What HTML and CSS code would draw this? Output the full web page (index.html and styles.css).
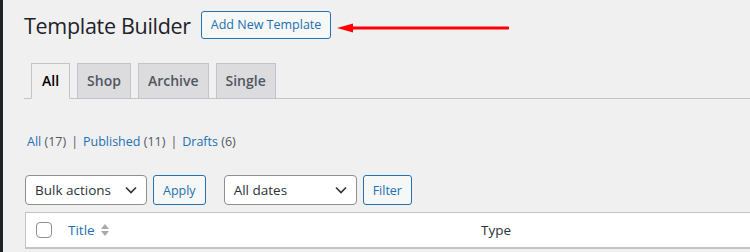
FILE: index.html
```html
<!DOCTYPE html>
<html>
<head>
  <link rel="stylesheet" href="styles.css">
</head>
<body>
  <div class="admin-edge"></div>
  <div class="wrap">
    <div class="page-header">
      <h1 class="page-title">Template Builder</h1>
      <a class="title-action">Add New Template</a>
      <svg class="pointer-arrow" width="172" height="12" viewBox="0 0 172 12">
        <line x1="12" y1="6" x2="171" y2="6" stroke="#ff0000" stroke-width="3" stroke-linecap="round"/>
        <polygon points="0,6 16,1.5 16,10.5" fill="#ff0000"/>
      </svg>
    </div>

    <nav class="nav-tabs">
      <a class="nav-tab active">All</a>
      <a class="nav-tab">Shop</a>
      <a class="nav-tab">Archive</a>
      <a class="nav-tab">Single</a>
    </nav>

    <ul class="subsubsub">
      <li><a>All</a> <span class="count">(17)</span></li>
      <li class="sep">|</li>
      <li><a>Published</a> <span class="count">(11)</span></li>
      <li class="sep">|</li>
      <li><a>Drafts</a> <span class="count">(6)</span></li>
    </ul>

    <div class="tablenav">
      <div class="select-box bulk">
        <span>Bulk actions</span>
        <svg width="12" height="8" viewBox="0 0 12 8"><path d="M1 1.5 6 6.5 11 1.5" fill="none" stroke="#2c3338" stroke-width="1.6"/></svg>
      </div>
      <button class="btn">Apply</button>
      <div class="select-box dates">
        <span>All dates</span>
        <svg width="12" height="8" viewBox="0 0 12 8"><path d="M1 1.5 6 6.5 11 1.5" fill="none" stroke="#2c3338" stroke-width="1.6"/></svg>
      </div>
      <button class="btn">Filter</button>
    </div>

    <div class="list-table">
      <div class="table-head">
        <div class="check-col"><span class="checkbox"></span></div>
        <div class="title-col">
          <a>Title</a>
          <svg class="sort" width="10" height="14" viewBox="0 0 10 14">
            <polygon points="1,6 5,1 9,6" fill="#a7aaad"/>
            <polygon points="1,8 9,8 5,13" fill="#a7aaad"/>
          </svg>
        </div>
        <div class="type-col">Type</div>
      </div>
    </div>
  </div>
</body>
</html>
```

FILE: styles.css
```css
* {
  box-sizing: border-box;
  margin: 0;
  padding: 0;
}

body {
  background-color: #f0f0f1;
  font-family: "Open Sans", "Noto Sans", sans-serif;
  color: #3c434a;
  display: flex;
  min-height: 100vh;
  overflow: hidden;
}

a {
  color: #2271b1;
  text-decoration: none;
}

.admin-edge {
  width: 3px;
  flex-shrink: 0;
  background-color: #1d2327;
}

.wrap {
  flex: 1;
  min-width: 0;
  margin-left: 21px;
}

.page-header {
  display: flex;
  align-items: center;
  height: 52px;
  padding-bottom: 2px;
}

.page-title {
  font-size: 21.5px;
  font-weight: 400;
  color: #1d2327;
  letter-spacing: -0.3px;
  margin-right: 10px;
}

.title-action {
  display: inline-block;
  height: 28px;
  line-height: 26px;
  padding: 0 9px;
  border: 1px solid #2271b1;
  border-radius: 3px;
  background-color: #f6f7f7;
  font-size: 12.5px;
  color: #2271b1;
}

.pointer-arrow {
  margin-left: 6px;
  margin-top: 6px;
}

.nav-tabs {
  display: flex;
  gap: 7px;
  padding-left: 7px;
  margin-top: 11px;
  border-bottom: 1px solid #c3c4c7;
}

.nav-tab {
  display: block;
  margin-bottom: -1px;
  padding: 5px 9px;
  line-height: 24px;
  border: 1px solid #c3c4c7;
  background-color: #dcdcde;
  font-size: 14px;
  font-weight: 600;
  color: #50575e;
}

.nav-tab.active {
  padding: 5px 10px;
  background-color: #f0f0f1;
  border-bottom-color: #f0f0f1;
  color: #000;
}

.subsubsub {
  list-style: none;
  display: flex;
  gap: 5px;
  margin-top: 33px;
  padding-left: 3px;
  font-size: 12.5px;
  line-height: 20px;
  color: #50575e;
}

.subsubsub .sep {
  color: #50575e;
}

.tablenav {
  display: flex;
  align-items: center;
  margin-top: 23px;
  padding-left: 1px;
  height: 30px;
}

.select-box {
  display: flex;
  align-items: center;
  justify-content: space-between;
  height: 30px;
  padding: 0 9px 0 9px;
  border: 1px solid #8c8f94;
  border-radius: 4px;
  background-color: #fff;
  font-size: 13.5px;
  color: #2c3338;
}

.select-box.bulk {
  width: 122px;
}

.select-box.dates {
  width: 133px;
  margin-left: 18px;
}

.btn {
  height: 30px;
  margin-left: 6px;
  padding: 0 9px;
  border: 1px solid #2271b1;
  border-radius: 3px;
  background-color: #f6f7f7;
  font-family: inherit;
  font-size: 12.5px;
  color: #2271b1;
}

.list-table {
  margin-top: 7px;
  margin-left: 1px;
  background-color: #fff;
  border: 1px solid #c3c4c7;
  border-right: none;
}

.table-head {
  display: flex;
  align-items: center;
  height: 35px;
  border-bottom: 1px solid #c3c4c7;
  font-size: 13.5px;
}

.check-col {
  width: 42px;
  padding-left: 10px;
  display: flex;
}

.checkbox {
  width: 16px;
  height: 16px;
  border: 1px solid #8c8f94;
  border-radius: 4px;
  background-color: #fff;
}

.title-col {
  width: 413px;
  display: flex;
  align-items: center;
  gap: 5px;
}

.type-col {
  color: #2c3338;
}
```
